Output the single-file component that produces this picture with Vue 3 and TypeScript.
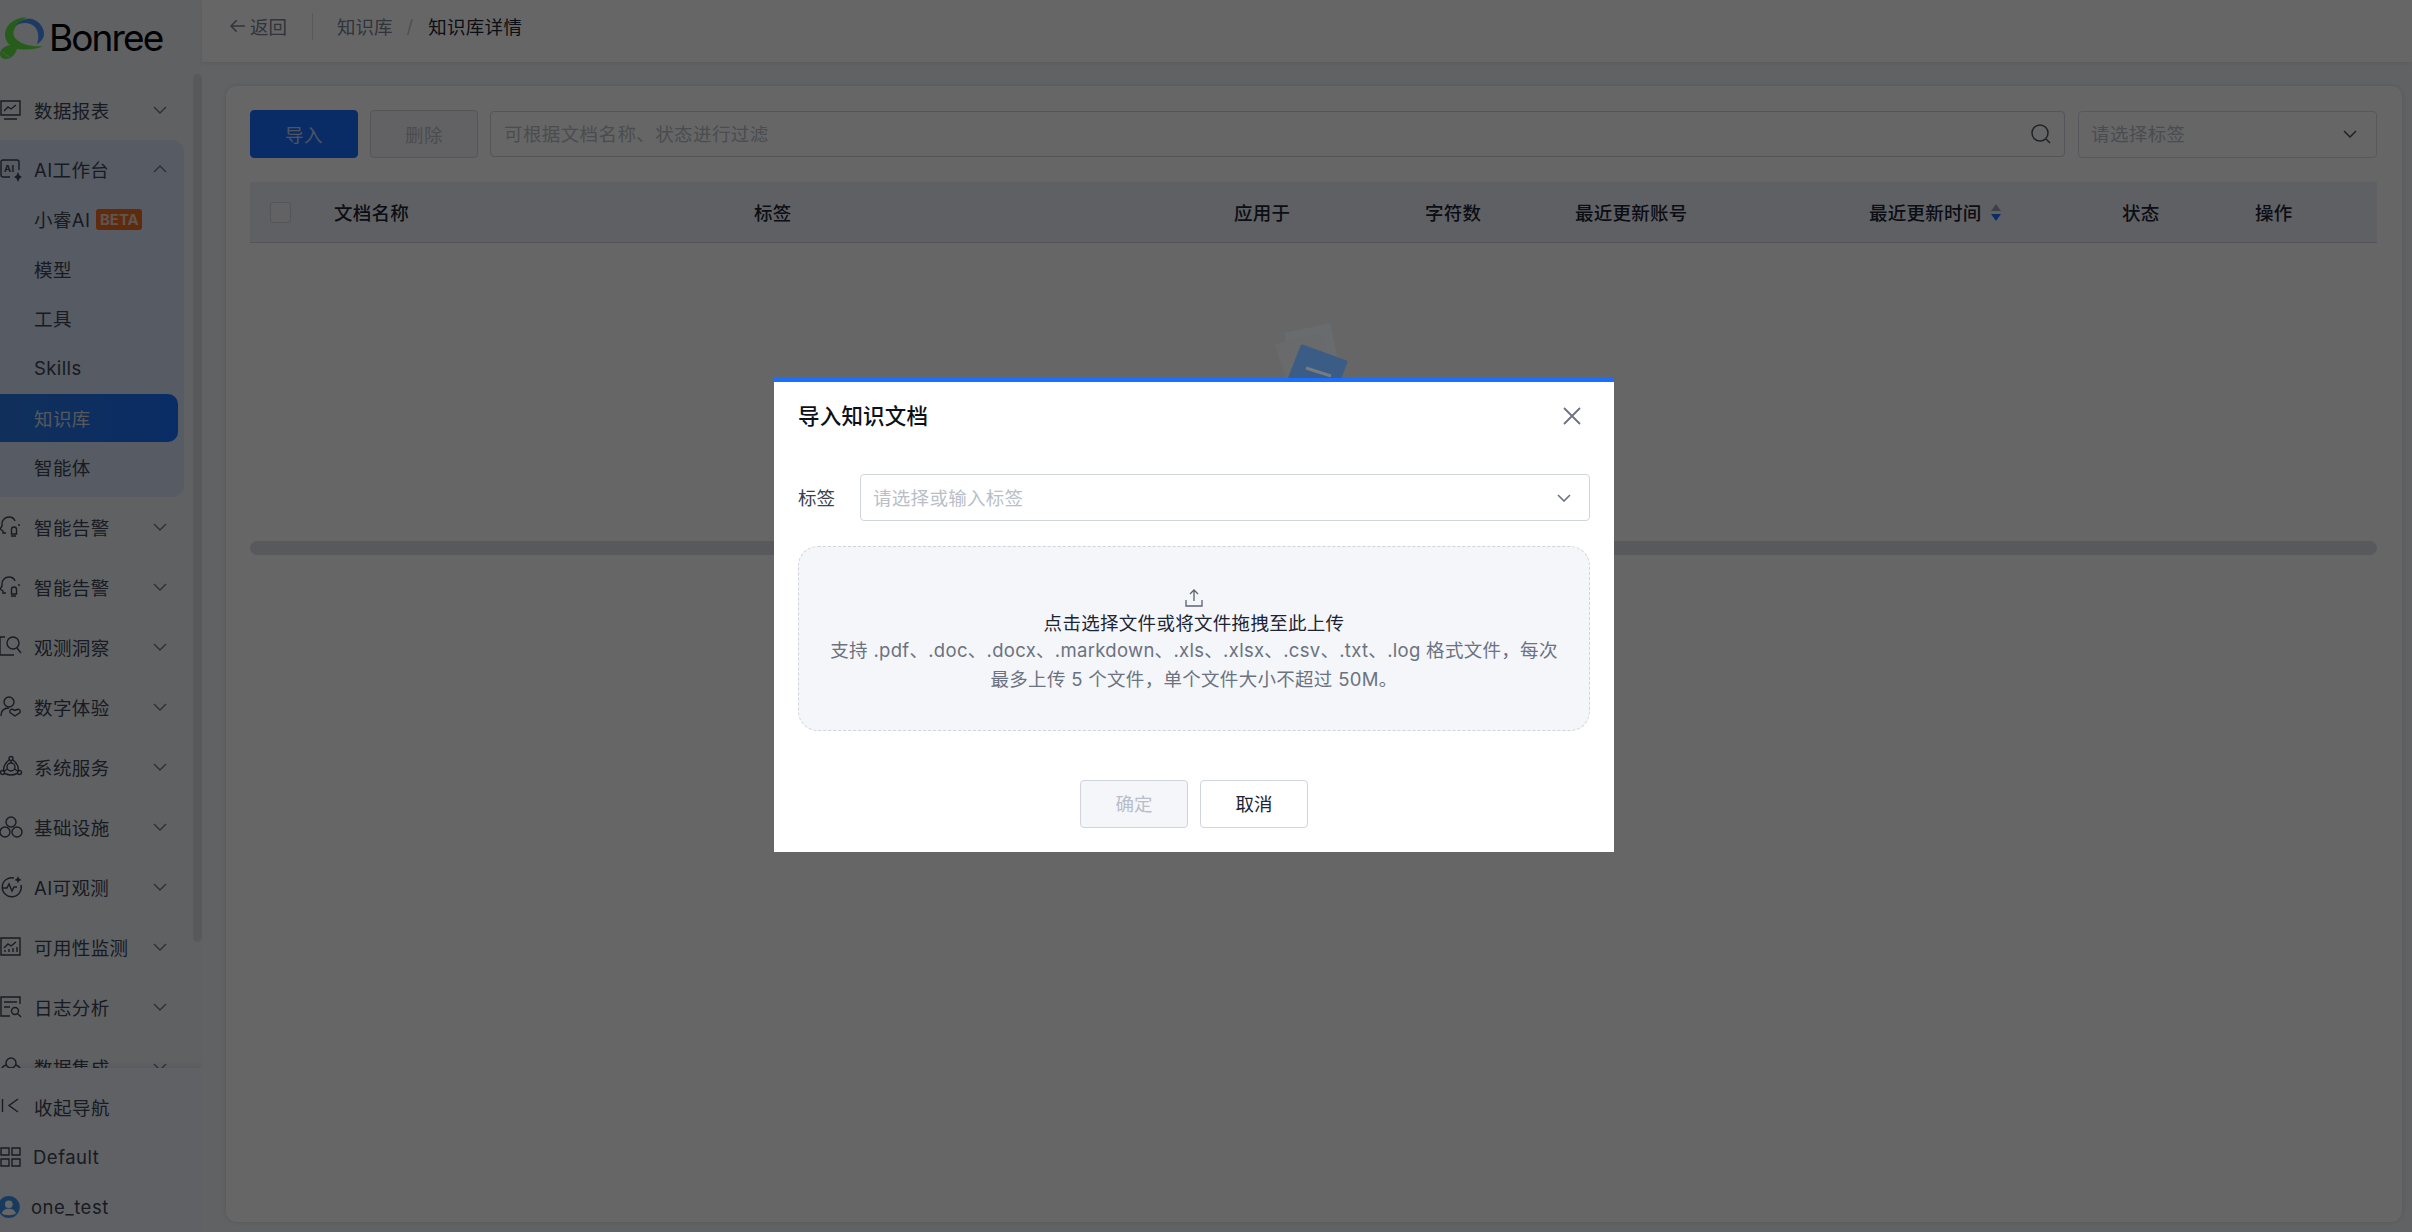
<script setup lang="ts">
interface Item { label: string; icon: string }
const top: Item = { label: '数据报表', icon: 'report' }
const subs = ['小睿AI', '模型', '工具', 'Skills', '知识库', '智能体']
const items: Item[] = [
  { label: '智能告警', icon: 'alert' },
  { label: '智能告警', icon: 'alert' },
  { label: '观测洞察', icon: 'insight' },
  { label: '数字体验', icon: 'user' },
  { label: '系统服务', icon: 'service' },
  { label: '基础设施', icon: 'infra' },
  { label: 'AI可观测', icon: 'aiobs' },
  { label: '可用性监测', icon: 'avail' },
  { label: '日志分析', icon: 'log' },
  { label: '数据集成', icon: 'data' }
]
const cols = ['文档名称', '标签', '应用于', '字符数', '最近更新账号', '最近更新时间', '状态', '操作']
</script>

<template>
  <div class="app">
    <aside class="side">
      <div class="logo">
        <svg class="logo-mark" viewBox="0 0 46 46" width="46" height="46">
          <path d="M27 .5C15 0 5 8 5 18c0 4 2 8 5 10-5 1-10 4-10 9 0 5 6 6 10 4 4-2 6-6 7-9 8 1 19 1 26-3-10 1-21-1-27-7C11 17 13 8 27 .5Z" fill="#62e844"/>
          <path d="M15 9c5-6 12-8 17-7 7 2 12 8 12 15 0 4-3 8-7 10 2-5 2-12-2-17-5-5-14-5-20-1Z" fill="#4b90f5"/>
          <path d="M2.500 35c2 2 4 4 7 4.500" stroke="#ddd" stroke-width="1" fill="none"/>
        </svg>
        <span class="logo-text">Bonree</span>
      </div>

      <nav class="nav">
        <div class="row">
          <span class="ic"><svg viewBox="0 0 22 22"><use href="#i-report"/></svg></span>
          <span class="lb">{{ top.label }}</span>
          <svg class="chev" viewBox="0 0 14 8"><path d="M1 1l6 6 6-6"/></svg>
        </div>
        <div class="group">
          <div class="row head">
            <span class="ic"><svg viewBox="0 0 22 22"><use href="#i-ai"/></svg></span>
            <span class="lb">AI工作台</span>
            <svg class="chev" viewBox="0 0 14 8"><path d="M1 7l6-6 6 6"/></svg>
          </div>
          <div class="subs">
            <div v-for="s in subs" :key="s" class="sub" :class="{ on: s === '知识库' }">
              {{ s }}<span v-if="s === '小睿AI'" class="beta">BETA</span>
            </div>
          </div>
        </div>
        <div v-for="(it, i) in items" :key="i" class="row">
          <span class="ic"><svg viewBox="0 0 22 22"><use :href="'#i-' + it.icon"/></svg></span>
          <span class="lb">{{ it.label }}</span>
          <svg class="chev" viewBox="0 0 14 8"><path d="M1 1l6 6 6-6"/></svg>
        </div>
      </nav>

      <div class="foot">
        <div class="frow">
          <span class="ic"><svg viewBox="0 0 22 22"><path d="M2.500 3v13M18 3l-9 6.500 9 6.500"/></svg></span>
          <span>收起导航</span>
        </div>
        <div class="frow">
          <span class="ic icd"><svg viewBox="0 0 22 22"><path d="M1 2h8v7H1zM1 13h8v7H1zM12 2h8v7h-8zM12 13h8v7h-8z"/></svg></span>
          <span>Default</span>
        </div>
        <div class="frow">
          <span class="ic ice">
            <svg viewBox="0 0 20 20" class="avatar"><circle cx="8" cy="10" r="10" fill="#3a94ee"/><circle cx="8" cy="7.500" r="3.500" fill="#fff"/><path d="M1.500 16c1-3.500 3.500-4.500 6.500-4.500s5.500 1 6.500 4.500c-3 2-10 2-13 0z" fill="#fff"/></svg>
          </span>
          <span>one_test</span>
        </div>
      </div>
      <div class="vbar"></div>
    </aside>

    <section class="main">
      <header class="top">
        <svg class="back-ic" viewBox="0 0 16 14"><path d="M7 1L1 7l6 6M1 7h15"/></svg>
        <span class="back">返回</span>
        <i class="sep"></i>
        <span class="crumb">知识库</span>
        <span class="slash">/</span>
        <span class="cur">知识库详情</span>
      </header>

      <div class="card">
        <div class="tools">
          <button class="btn pri">导入</button>
          <button class="btn dis">删除</button>
          <div class="search">
            <span>可根据文档名称、状态进行过滤</span>
            <svg viewBox="0 0 20 20"><circle cx="9" cy="9" r="8"/><path d="M15 15l4 4"/></svg>
          </div>
          <div class="tagsel">
            <span>请选择标签</span>
            <svg viewBox="0 0 14 8"><path d="M1 1l6 6 6-6"/></svg>
          </div>
        </div>

        <div class="thead">
          <span class="cb"><i></i></span>
          <span v-for="c in cols" :key="c" class="th">
            {{ c }}
            <svg v-if="c === '最近更新时间'" class="sort" viewBox="0 0 10 17">
              <path d="M5 0l5 7H0z" fill="#9aa2b1"/><path d="M5 17l5-7H0z" fill="#1a6fff"/>
            </svg>
          </span>
        </div>

        <div class="tbody">
          <svg class="empty" viewBox="0 0 110 75" width="110" height="75">
            <path d="M27 24L70 15 78 52 33 60Z" fill="#686c6f" stroke="#686c6f" stroke-width="3" stroke-linejoin="round"/>
            <path d="M17 35L62 24 76 68 30 75Z" fill="#696a6b" stroke="#696a6b" stroke-width="2" stroke-linejoin="round"/>
            <path d="M43 36L87 52 76 80 29 72Z" fill="#3a5c85" stroke="#3a5c85" stroke-width="3" stroke-linejoin="round"/>
            <path d="M47 58L72 66" stroke="#767b81" stroke-width="3"/>
          </svg>
        </div>
        <div class="hbar"></div>
      </div>
    </section>

    <div class="mask"></div>

    <div class="modal">
      <div class="m-head">
        <span class="m-title">导入知识文档</span>
        <svg class="m-close" viewBox="0 0 18 18"><path d="M1 1l16 16M17 1L1 17"/></svg>
      </div>
      <div class="m-form">
        <span class="m-label">标签</span>
        <div class="m-select">
          <span>请选择或输入标签</span>
          <svg viewBox="0 0 14 8"><path d="M1 1l6 6 6-6"/></svg>
        </div>
      </div>
      <div class="drop">
        <svg class="up" viewBox="0 0 18 18"><path d="M9 12V1M5 5l4-4 4 4M1 11v6h16v-6"/></svg>
        <div class="d1">点击选择文件或将文件拖拽至此上传</div>
        <div class="d2">支持 .pdf、.doc、.docx、.markdown、.xls、.xlsx、.csv、.txt、.log 格式文件，每次<br>最多上传 5 个文件，单个文件大小不超过 50M。</div>
      </div>
      <div class="m-foot">
        <button class="mb ok">确定</button>
        <button class="mb">取消</button>
      </div>
    </div>

    <svg class="defs" width="0" height="0">
      <defs>
        <g id="i-report"><path d="M1 2h19v14H1zM4 20h13M4 12l4-4 3 2 5-4"/></g>
        <g id="i-ai"><path d="M10 19H3a2 2 0 0 1-2-2V4a2 2 0 0 1 2-2h14a2 2 0 0 1 2 2v8"/><path d="M18 14l1.500 3.500L22 19l-2.500 1.500L18 24l-1.500-3.500L14 19l2.500-1.500z" fill="currentColor" stroke="none"/><text x="4" y="14" font-size="9.500" font-weight="700" font-family="Inter" fill="currentColor" stroke="none">AI</text></g>
        <g id="i-alert"><path d="M15 5c-1-3-4-4-6-4C5 1 2 4 2 8v2l-2 3 3 2v2h3M19 10V8M11 20h5"/><path d="M14 11a2.500 2.500 0 0 1 2.500 2.500V18h-5v-4.500A2.500 2.500 0 0 1 14 11z"/></g>
        <g id="i-insight"><path d="M5 1H0v18h14"/><circle cx="13" cy="7" r="6"/><path d="M17 12l4 5"/></g>
        <g id="i-user"><circle cx="9" cy="6" r="5"/><path d="M1 20c0-6 3-8 8-8"/><path d="M15 20l-5-3.500c-1-2 1-4 3-3l2 1 2-1c2-1 4 1 3 3z"/></g>
        <g id="i-service"><circle cx="11" cy="11" r="4"/><path d="M11 7V4M7.500 13l-3 2M14.500 13l3 2M4 16c-1-4 0-8 5-12M18 16c1-4 0-8-5-12M5 17.500c4 2 8 2 12 0"/><circle cx="11" cy="2.500" r="2"/><circle cx="2.500" cy="16.500" r="2"/><circle cx="19.500" cy="16.500" r="2"/></g>
        <g id="i-infra"><circle cx="11" cy="6" r="5"/><circle cx="5" cy="16" r="5"/><circle cx="17" cy="16" r="5"/></g>
        <g id="i-aiobs"><path d="M14 2a9.500 9.500 0 1 0 7 7"/><path d="M3 12h4l2-4 3 7 2-4h3"/><path d="M18 0l1 2.500L21.500 4 19 5l-1 2.500L17 5l-2.500-1L17 2.500z" fill="currentColor" stroke="none"/></g>
        <g id="i-avail"><path d="M1 2h19v17H1zM4 12l4-4 3 2 5-4M5 16v-2M9 16v-3M13 16v-4M17 16v-5"/></g>
        <g id="i-log"><path d="M20 8V1H1v19h9M4 6h13M4 11h6"/><circle cx="15" cy="15" r="3.500"/><path d="M18 18l3 3"/></g>
        <g id="i-data"><circle cx="11" cy="7" r="5"/><path d="M6 9c-3 1-5 3-5 7v5h20v-5c0-4-2-6-5-7"/></g>
      </defs>
    </svg>
  </div>
</template>

<style>
html, body { margin: 0; background: #f0f4f9; }
</style>

<style scoped>
.app {
  position: relative;
  display: flex;
  width: 2412px;
  height: 1232px;
  overflow: hidden;
  font-family: Inter, "Noto Sans CJK SC", sans-serif;
  font-size: 18.5px;
  color: #1d2433;
  background: #f0f4f9;
}
.defs { position: absolute; }

/* side */
.side {
  position: relative;
  flex: 0 0 202px;
  display: flex;
  flex-direction: column;
  background: #eef2f8;
  overflow: hidden;
}
.logo { height: 80px; flex: none; display: flex; align-items: flex-start; }
.logo-mark { margin-top: 17px; flex: none; overflow: visible; }
.logo-text {
  margin: 10px 0 0 3px;
  font-size: 37px;
  line-height: 56px;
  font-weight: 400;
  letter-spacing: -1.9px;
  color: #000;
}
.nav { flex: 1; overflow: hidden; min-height: 0; }
.row {
  height: 60px;
  display: flex;
  align-items: center;
  color: #3d4554;
  letter-spacing: 0.4px;
}
.ic { flex: 0 0 34px; display: flex; align-items: center; }
.ic svg {
  width: 22px;
  height: 22px;
  fill: none;
  stroke: currentColor;
  stroke-width: 1.400;
  overflow: visible;
}
.lb { flex: 1; white-space: nowrap; }
.chev {
  width: 14px;
  height: 8px;
  margin-right: 35px;
  flex: none;
  fill: none;
  stroke: #6e7686;
  stroke-width: 1.400;
}
.group {
  width: 184px;
  height: 357px;
  background: #d9e3f7;
  border-radius: 0 12px 12px 0;
}
.head { padding-bottom: 2px; box-sizing: border-box; }
.head .chev { margin-right: 17px; }
.subs { display: flex; flex-direction: column; gap: 1.600px; margin-top: -4px; }
.sub {
  height: 48px;
  width: 178px;
  padding: 0 0 1.500px 34px;
  box-sizing: border-box;
  display: flex;
  align-items: center;
  color: #3d4554;
  letter-spacing: 0.4px;
  border-radius: 0 10px 10px 0;
}
.sub.on { background: linear-gradient(90deg, #2a78e0, #1a6fff); color: #d7dde6; }
.beta {
  margin-left: 6px;
  width: 46px;
  height: 21px;
  border-radius: 3px;
  background: #f06a1f;
  color: #e9d5c8;
  font-size: 15px;
  font-weight: 700;
  letter-spacing: 0;
  display: flex;
  align-items: center;
  justify-content: center;
}
.foot {
  flex: 0 0 160px;
  position: relative;
  background: #eff3f9;
  box-shadow: 0 -2px 6px rgba(0, 0, 0, 0.08);
  padding-top: 14.500px;
  box-sizing: border-box;
  color: #3d4554;
  letter-spacing: 0.5px;
}
.frow { height: 50px; display: flex; align-items: center; }
.ice { flex-basis: 31px; }
.icd { flex-basis: 33px; }
.ic .avatar { stroke: none; }
.vbar {
  position: absolute;
  left: 193px;
  top: 74px;
  width: 9px;
  height: 868px;
  border-radius: 5px;
  background: #dcdfe6;
}

/* main */
.main { flex: 1; display: flex; flex-direction: column; min-width: 0; }
.top {
  flex: 0 0 62px;
  background: #fff;
  box-sizing: border-box;
  padding: 0 0 10px 28px;
  display: flex;
  align-items: center;
  box-shadow: 0 1px 3px rgba(0, 0, 0, 0.08);
  position: relative;
}
.back-ic { width: 15px; height: 14px; fill: none; stroke: #7a8291; stroke-width: 1.600; flex: none; }
.back { margin-left: 5px; color: #7a8291; }
.sep { width: 1px; height: 27px; background: #d9dce2; margin: 0 24px 0 25px; }
.crumb { color: #7a8291; }
.slash { margin: 0 14px; color: #c3c8d1; }
.cur { color: #1d2433; letter-spacing: 0.3px; margin-left: 1px; }

.card {
  margin: 24px 10px 10px 24px;
  flex: 1;
  box-sizing: border-box;
  background: #fff;
  border-radius: 10px;
  padding: 24px 25px 0 24px;
  box-shadow: 0 0 4px rgba(0, 0, 0, 0.12);
}
.tools { display: flex; gap: 12px; align-items: center; height: 48px; }
.btn {
  flex: 0 0 108px;
  height: 48px;
  padding: 0;
  border-radius: 4px;
  font: inherit;
  letter-spacing: 0.4px;
}
.pri { background: #1a6fff; border: 1px solid #1a6fff; color: #bcd3f7; }
.dis { background: #f4f6fa; border: 1.500px solid #d0d5dd; color: #b9bec8; }
.search {
  flex: 0 0 1575px;
  height: 46px;
  box-sizing: border-box;
  border: 1.500px solid #cfd4dc;
  border-radius: 4px;
  padding: 0 13px;
  display: flex;
  align-items: center;
  justify-content: space-between;
  color: #b9bec8;
  letter-spacing: 0.4px;
}
.search span, .tagsel span, .m-select span { padding-bottom: 1.500px; }
.search svg { width: 20px; height: 20px; fill: none; stroke: #4d5564; stroke-width: 1.500; }
.tagsel {
  flex: 0 0 299px;
  margin-left: 1px;
  height: 47px;
  box-sizing: border-box;
  border: 1.500px solid #d9dde4;
  border-radius: 4px;
  padding: 0 19px 0 12px;
  display: flex;
  align-items: center;
  justify-content: space-between;
  color: #b9bec8;
  letter-spacing: 0.4px;
}
.tagsel svg { width: 14px; height: 8px; fill: none; stroke: #4d5564; stroke-width: 1.500; }
.thead {
  margin-top: 24px;
  height: 61px;
  box-sizing: border-box;
  background: #edf1f7;
  border-bottom: 1.500px solid #cfd4dc;
  display: grid;
  grid-template-columns: 84px 420px 480px 191px 150px 294px 253px 133px 122px;
  align-items: center;
}
.cb { padding-left: 20px; display: flex; }
.cb i {
  width: 21px;
  height: 21px;
  box-sizing: border-box;
  border: 1.500px solid #cfd4dc;
  border-radius: 3px;
  background: #f4f6fa;
}
.th { font-weight: 500; display: flex; align-items: center; gap: 8px; letter-spacing: 0.25px; }
.sort { width: 12px; height: 17px; }
.tbody { height: 298px; box-sizing: border-box; padding-top: 67px; display: flex; justify-content: center; overflow: hidden; }
.empty { position: relative; z-index: 2; overflow: visible; }
.hbar { height: 14px; border-radius: 7px; background: #dcdfe6; }

/* modal */
.mask { position: absolute; inset: 0; background: rgba(0, 0, 0, 0.6); }
.modal {
  position: absolute;
  z-index: 3;
  left: 774px;
  top: 378px;
  width: 840px;
  height: 474px;
  box-sizing: border-box;
  background: #fff;
  border-top: 4px solid #1a6fff;
  padding: 0 24px;
}
.m-head { height: 68px; padding-bottom: 3px; box-sizing: border-box; display: flex; align-items: center; justify-content: space-between; }
.m-title { font-size: 21.500px; font-weight: 500; color: #0d1117; letter-spacing: 0.2px; }
.m-close { width: 18px; height: 18px; margin: 3px 9px 0 0; fill: none; stroke: #6b7280; stroke-width: 1.800; }
.m-form { margin-top: 24px; display: flex; align-items: center; }
.m-label { flex: 0 0 62px; color: #3a4250; padding-bottom: 2px; }
.m-select {
  flex: 1;
  height: 47px;
  box-sizing: border-box;
  border: 1.500px solid #d0d5dd;
  border-radius: 4px;
  padding: 0 18px 0 12px;
  display: flex;
  align-items: center;
  justify-content: space-between;
  color: #b9bec8;
  letter-spacing: 0.3px;
}
.m-select svg { width: 14px; height: 8px; fill: none; stroke: #6b7280; stroke-width: 1.600; }
.drop {
  margin-top: 25px;
  height: 185px;
  box-sizing: border-box;
  background: #f4f6fa;
  border: 1.500px dashed #d0d5dd;
  border-radius: 20px;
  padding-top: 42px;
  text-align: center;
  white-space: nowrap;
}
.up { display: block; margin: 0 auto; width: 18px; height: 18px; fill: none; stroke: #5b6372; stroke-width: 1.300; }
.d1 { line-height: 29px; margin-top: 2px; margin-bottom: -2px; color: #1d2433; letter-spacing: 0.3px; }
.d2 { line-height: 29px; color: #6b7280; letter-spacing: 0.3px; }
.m-foot { margin-top: 49px; display: flex; justify-content: center; gap: 12px; }
.mb {
  width: 108px;
  height: 48px;
  padding: 0 0 2px;
  box-sizing: border-box;
  background: #fff;
  border: 1.500px solid #d0d5dd;
  border-radius: 4px;
  font: inherit;
  color: #1d2433;
}
.ok { background: #f4f6fa; color: #b9bec8; }
</style>
